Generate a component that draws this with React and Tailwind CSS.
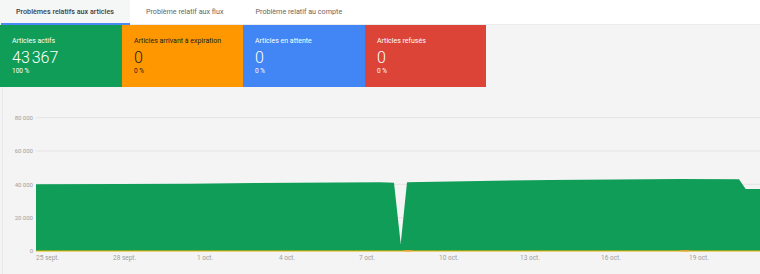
import React from "react";

const cards = [
  { label: "Articles actifs", value: "43\u202F367", pct: "100 %", bg: "bg-[#0f9d58]", text: "text-white", w: "w-[122px]" },
  { label: "Articles arrivant à expiration", value: "0", pct: "0 %", bg: "bg-[#ff9800]", text: "text-[#202124]", w: "w-[121px]" },
  { label: "Articles en attente", value: "0", pct: "0 %", bg: "bg-[#4285f4]", text: "text-white", w: "w-[122px]" },
  { label: "Articles refusés", value: "0", pct: "0 %", bg: "bg-[#db4437]", text: "text-white", w: "w-[121px]" },
];

const grid = [
  { y: 30.7, label: "80 000" },
  { y: 64, label: "60 000" },
  { y: 97.3, label: "40 000" },
  { y: 130.7, label: "20 000" },
  { y: 164, label: "0" },
];

const xLabels = [
  { x: 36, t: "25 sept." },
  { x: 113, t: "28 sept." },
  { x: 197, t: "1 oct." },
  { x: 279, t: "4 oct." },
  { x: 359, t: "7 oct." },
  { x: 439, t: "10 oct." },
  { x: 520, t: "13 oct." },
  { x: 601, t: "16 oct." },
  { x: 689, t: "19 oct." },
];

const area =
  "M36,97.3 L120,97 L190,96.7 L255,96 L380,95.3 L394,95.7 L400.7,157 L407,95.3 L480,94 L550,93 L680,92 L739,92.3 L745.7,102 L760,102 L760,164 L36,164 Z";

function Chart() {
  return (
    <svg width="760" height="187" viewBox="0 0 760 187" className="block" style={{ fontFamily: "Roboto, 'Liberation Sans', sans-serif" }}>
      <line x1="2.5" y1="0" x2="2.5" y2="187" stroke="#e8e8e8" strokeWidth="1" />
      {grid.map((g) => (
        <g key={g.label}>
          <line x1="36" y1={g.y} x2="760" y2={g.y} stroke="#e4e4e4" strokeWidth="1" />
          <text x="33" y={g.y + 2.2} textAnchor="end" fontSize="6" fill="#9e9e9e">
            {g.label}
          </text>
        </g>
      ))}
      <path d={area} fill="#0f9d58" />
      <line x1="36" y1="164" x2="760" y2="164" stroke="#f4b400" strokeWidth="1" />
      <ellipse cx="408" cy="163.8" rx="5" ry="0.8" fill="#e8a33a" />
      <ellipse cx="685" cy="163.8" rx="5" ry="0.8" fill="#e8a33a" />
      {xLabels.map((l) => (
        <text key={l.t} x={l.x} y="173" fontSize="6.5" fill="#9e9e9e">
          {l.t}
        </text>
      ))}
    </svg>
  );
}

export default function App() {
  return (
    <div className="w-[760px] h-[274px] overflow-hidden bg-[#f4f4f4]" style={{ fontFamily: "Roboto, 'Liberation Sans', sans-serif" }}>
      <div className="flex h-[25px] bg-white border-b border-[#ebebeb]">
        <div className="relative flex items-center px-4 bg-[#f5f6f6] text-[7.2px] font-medium text-[#3c4043]">
          Problèmes relatifs aux articles
          <div className="absolute left-[1px] right-0 bottom-[-1px] h-[2px] bg-[#4a8af4]" />
        </div>
        <div className="flex items-center px-4 text-[7.2px] text-[#666]">Problème relatif aux flux</div>
        <div className="flex items-center px-4 text-[7.2px] text-[#666]">Problème relatif au compte</div>
      </div>
      <div className="flex h-[62px]">
        {cards.map((c) => (
          <div key={c.label} className={`${c.w} ${c.bg} ${c.text} flex flex-col pl-3 pt-[11px]`}>
            <div className="text-[7px] leading-[10px]">{c.label}</div>
            <div className="text-[16px] leading-[16px] mt-[4px] font-light tracking-[-0.3px]">{c.value}</div>
            <div className="text-[6.5px] leading-[8px] mt-[1px]">{c.pct}</div>
          </div>
        ))}
      </div>
      <Chart />
    </div>
  );
}
